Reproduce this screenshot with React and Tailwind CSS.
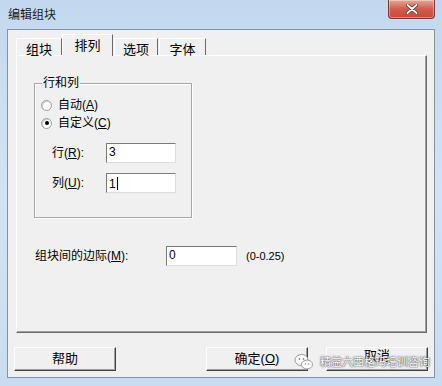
import React from "react";

const font = { fontFamily: '"Liberation Sans", "Noto Sans CJK SC", sans-serif' };

function Tab({ label, active, className }) {
  if (active) {
    return (
      <div
        className={`relative z-10 -mb-px flex h-[22px] items-start justify-center border-l border-t border-r border-l-white border-t-white border-r-[#696969] bg-[#f0f0f0] pt-[1px] text-[13px] text-black ${className}`}
      >
        {label}
      </div>
    );
  }
  return (
    <div
      className={`flex h-[17px] items-start justify-center border-l border-t border-r border-l-white border-t-white border-r-[#696969] bg-[#f0f0f0] pt-[1px] text-[13px] text-black ${className}`}
    >
      {label}
    </div>
  );
}

function Radio({ checked, children }) {
  return (
    <div className="flex items-center gap-[6px] h-[18px]">
      <span className="flex h-[11px] w-[11px] items-center justify-center rounded-full border border-[#9a9a9a] bg-white shadow-[inset_1px_1px_0_#d0d0d0]">
        {checked && <span className="h-[4px] w-[4px] rounded-full bg-black" />}
      </span>
      <span className="text-[12px] leading-none text-black">{children}</span>
    </div>
  );
}

function Field({ value, caret, className }) {
  return (
    <div
      className={`h-[20px] border border-t-[#7a7a7a] border-l-[#7a7a7a] border-r-[#dcdcdc] border-b-[#dcdcdc] bg-white pl-[2px] pt-[1px] text-[12px] leading-[14px] text-black ${className}`}
    >
      {value}
      {caret && <span className="ml-[1px] inline-block h-[13px] w-px translate-y-[2px] bg-black" />}
    </div>
  );
}

function Button({ children, className }) {
  return (
    <div
      className={`flex h-[24px] w-[102px] items-center justify-center border border-t-white border-l-white border-r-[#404040] border-b-[#404040] bg-[#f0f0f0] shadow-[inset_-1px_-1px_0_#a0a0a0] text-[13px] text-black ${className}`}
    >
      {children}
    </div>
  );
}

export default function App() {
  return (
    <div
      className="relative h-[386px] w-[442px] overflow-hidden bg-gradient-to-b from-[#c3d8ee] via-[#d3e3f4] to-[#c9dcef]"
      style={font}
    >
      {/* title bar */}
      <div className="flex h-[29px] items-start justify-between">
        <div className="ml-[8px] mt-[6px] text-[12px] text-[#1a1a1a]">编辑组块</div>
        <div className="mr-[7px] flex h-[19px] w-[47px] items-center justify-center rounded-b-[4px] border border-t-0 border-[#7a3a34] bg-gradient-to-b from-[#e5a89b] via-[#cf5c4c] to-[#c44a3c] shadow-[inset_0_0_0_1px_rgba(255,255,255,0.35)]">
          <svg width="12" height="10" viewBox="0 0 12 10">
            <path d="M1.5 1 L10.5 9 M10.5 1 L1.5 9" stroke="#4a1a14" strokeWidth="3.2" strokeLinecap="round" />
            <path d="M1.5 1 L10.5 9 M10.5 1 L1.5 9" stroke="#ffffff" strokeWidth="2" strokeLinecap="round" />
          </svg>
        </div>
      </div>

      {/* client area */}
      <div className="ml-[7px] h-[349px] w-[428px] border border-[#7f93aa] bg-[#f0f0f0]">
        {/* tabs */}
        <div className="ml-[8px] mt-[5px] flex h-[20px] items-end">
          <Tab label="组块" className="w-[46px]" />
          <Tab label="排列" active className="w-[51px]" />
          <Tab label="选项" className="ml-[1px] w-[44px]" />
          <Tab label="字体" className="ml-[1px] w-[47px]" />
        </div>

        {/* panel */}
        <div className="ml-[8px] h-[278px] w-[411px] border border-t-white border-l-white border-r-[#696969] border-b-[#696969] shadow-[inset_-1px_-1px_0_#a0a0a0]">
          {/* group box */}
          <div className="relative ml-[17px] mt-[27px] h-[135px] w-[158px] border border-[#a7a7a7] shadow-[1px_1px_0_#ffffff,inset_1px_1px_0_#ffffff]">
            <div className="absolute left-[7px] top-[-8px] bg-[#f0f0f0] px-[1px] text-[12px] leading-[14px] text-black">
              行和列
            </div>
            <div className="ml-[6px] mt-[12px] flex flex-col">
              <Radio>
                自动(<u>A</u>)
              </Radio>
              <Radio checked>
                自定义(<u>C</u>)
              </Radio>
            </div>
            <div className="mt-[11px] flex items-center">
              <div className="ml-[17px] w-[54px] text-[12px] text-black">
                行(<u>R</u>):
              </div>
              <Field value="3" className="w-[70px]" />
            </div>
            <div className="mt-[10px] flex items-center">
              <div className="ml-[17px] w-[54px] text-[12px] text-black">
                列(<u>U</u>):
              </div>
              <Field value="1" caret className="w-[70px]" />
            </div>
          </div>

          {/* margin row */}
          <div className="mt-[28px] flex items-center">
            <div className="ml-[18px] w-[131px] text-[12px] text-black">
              组块间的边际(<u>M</u>):
            </div>
            <Field value="0" className="w-[71px]" />
            <div className="ml-[9px] text-[11px] text-black">(0-0.25)</div>
          </div>
        </div>

        {/* buttons */}
        <div className="ml-[6px] mt-[14px] flex">
          <Button>帮助</Button>
          <Button className="ml-[90px]">
            确定(<u>O</u>)
          </Button>
          <Button className="ml-[18px]">
            <span className="-translate-y-[3px]">取消</span>
          </Button>
        </div>
      </div>

      {/* watermark */}
      <div className="absolute left-[294px] top-[353px] flex items-center gap-[6px]">
        <svg width="20" height="18" viewBox="0 0 20 18">
          <ellipse cx="7.5" cy="7" rx="6.5" ry="5.5" fill="#ffffff" stroke="#9a9a9a" strokeWidth="1" />
          <ellipse cx="13" cy="11.5" rx="5.5" ry="4.5" fill="#ffffff" stroke="#9a9a9a" strokeWidth="1" />
          <circle cx="5.5" cy="6" r="0.9" fill="#8a8a8a" />
          <circle cx="9.5" cy="6" r="0.9" fill="#8a8a8a" />
          <circle cx="11.5" cy="11" r="0.8" fill="#8a8a8a" />
          <circle cx="14.5" cy="11" r="0.8" fill="#8a8a8a" />
        </svg>
        <span className="text-[11px] leading-none text-white [text-shadow:0_0_1px_#333,0_0_2px_#555]">
          精益六西格玛培训咨询
        </span>
      </div>
    </div>
  );
}
